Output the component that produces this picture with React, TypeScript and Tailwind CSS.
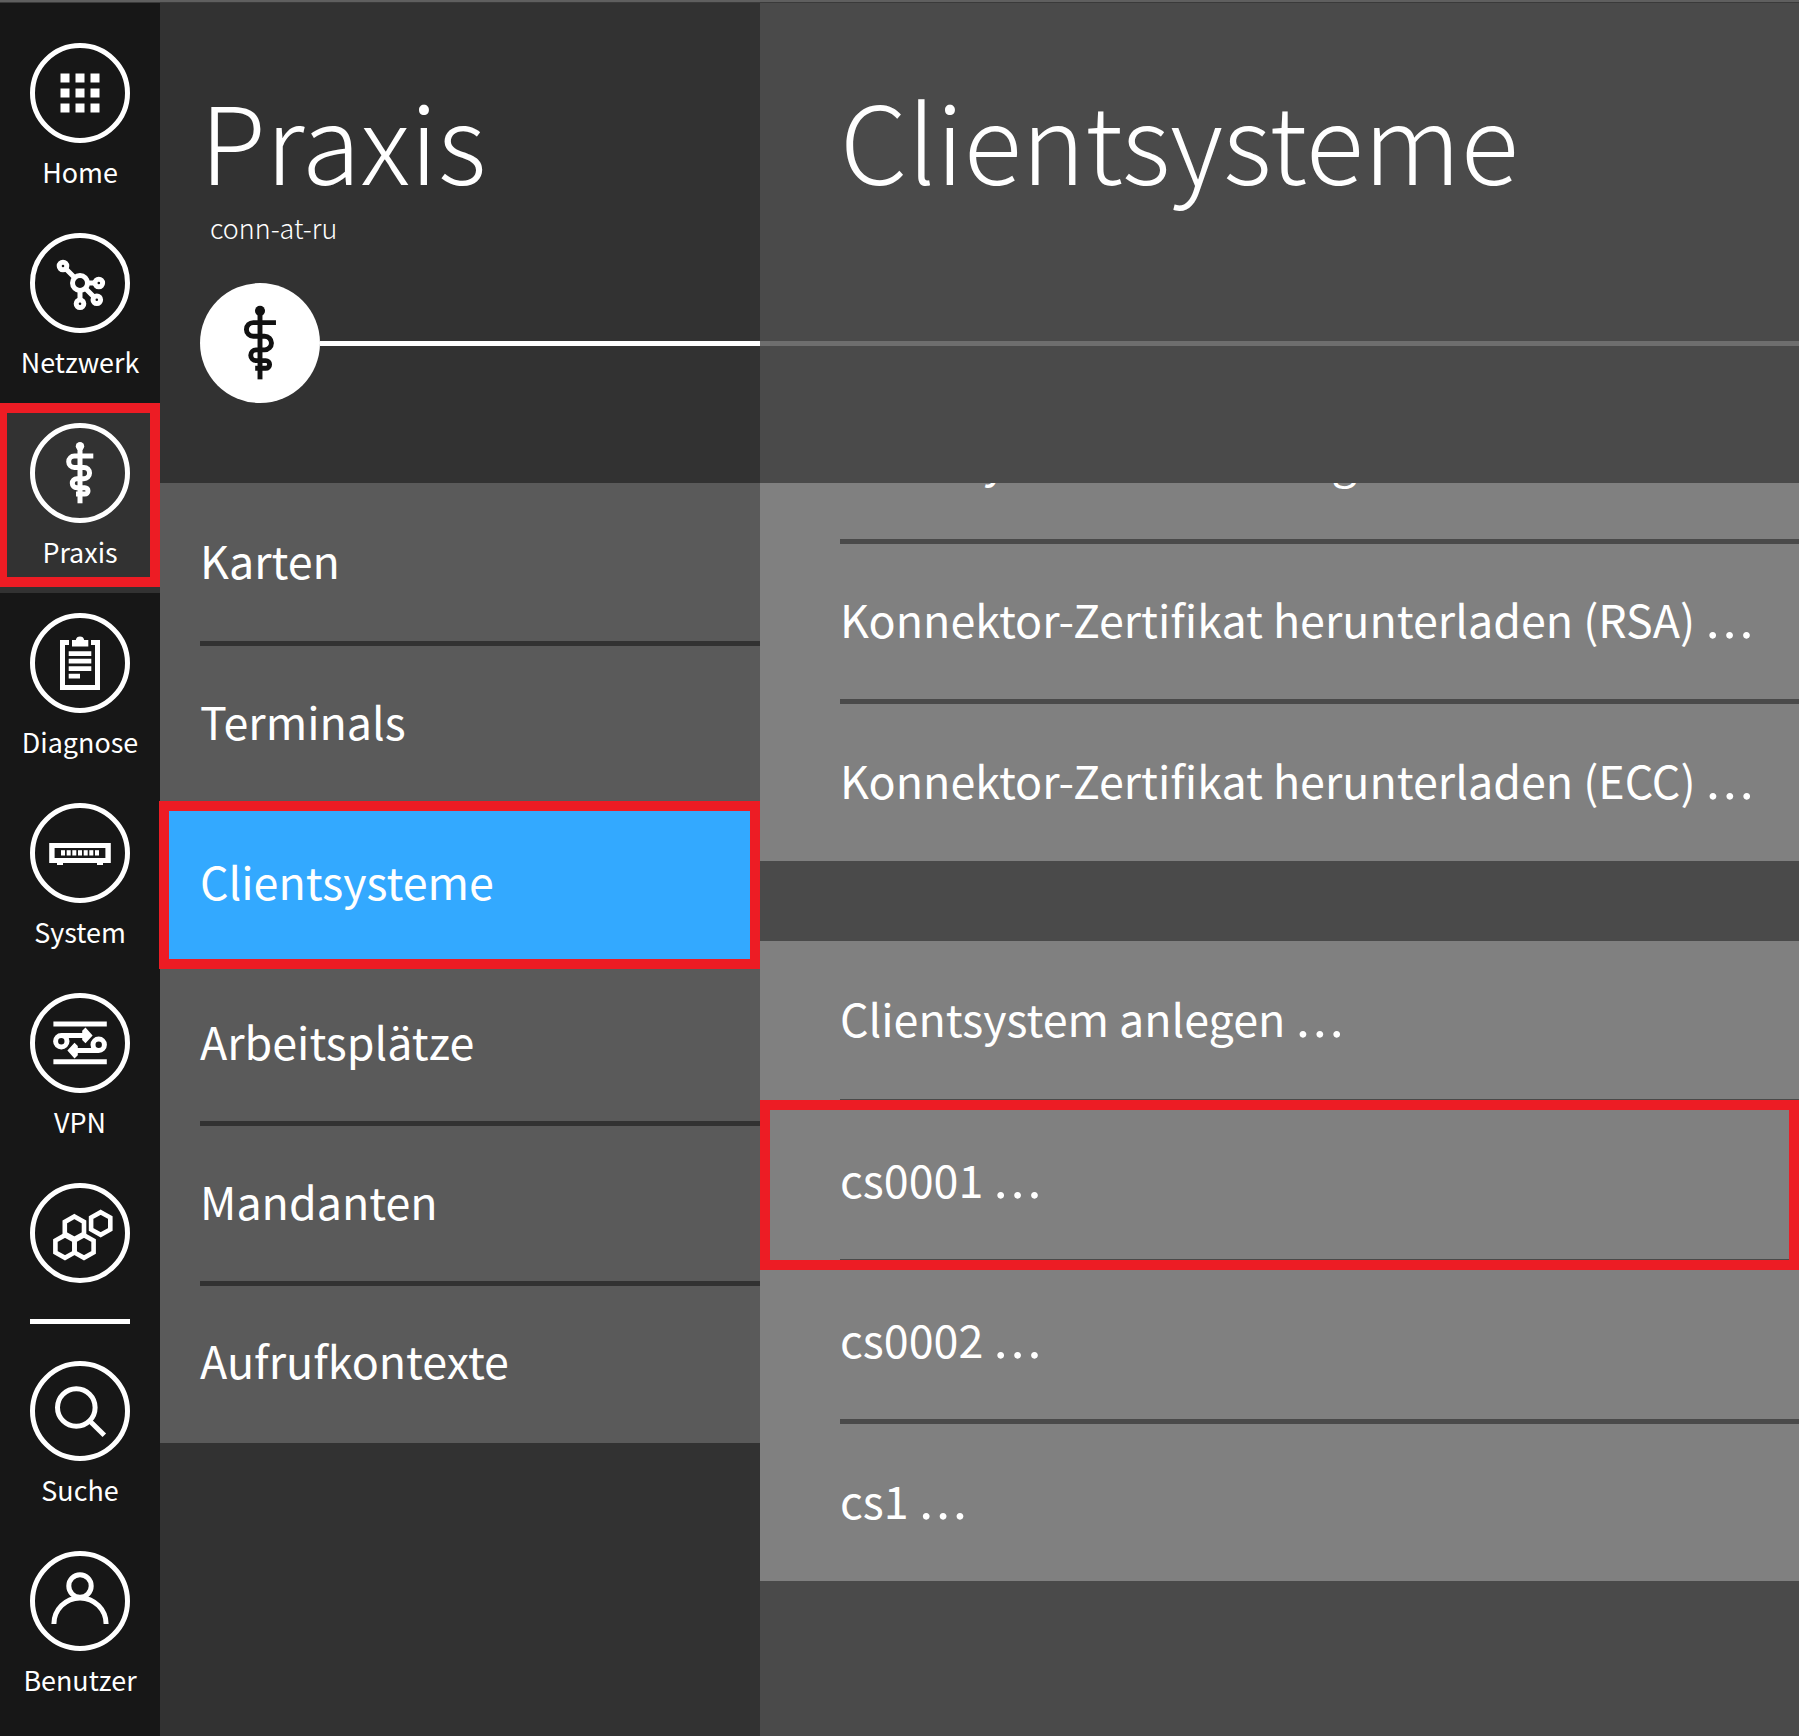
import type { ReactNode } from 'react';

function Staff({ className, strokeWidth }: { className: string; strokeWidth: number }) {
  return (
    <svg viewBox="0 0 100 100" className={className} fill="none" stroke="currentColor" strokeWidth={strokeWidth}>
      <circle cx="50" cy="23.2" r="4.2" fill="currentColor" stroke="none" />
      <path d="M50 24V80.3" />
      <path d="M63.3 33H44.4a5.7 5.7 0 0 0 0 11.4H53.9a5.65 5.65 0 0 1 0 11.3H46.8a4.5 4.5 0 0 0 0 9H54.8a3.2 3.2 0 0 1 0 6.4H46" />
    </svg>
  );
}

function HomeIcon() {
  const steps = [30.5, 45.5, 60.5];
  return (
    <svg viewBox="0 0 100 100" className="size-[100px] shrink-0" fill="currentColor">
      {steps.map((y) => steps.map((x) => <rect key={`${x}-${y}`} x={x} y={y} width="9" height="9" />))}
    </svg>
  );
}

function NetworkIcon() {
  return (
    <svg viewBox="0 0 100 100" className="size-[100px] shrink-0" fill="none" stroke="currentColor" strokeWidth="5">
      <circle cx="50" cy="50" r="7.5" />
      <circle cx="33" cy="33" r="3.8" />
      <circle cx="68.8" cy="50" r="3.8" />
      <circle cx="66.8" cy="66.7" r="3.8" />
      <circle cx="50" cy="70.7" r="3.8" />
      <path d="M35.5 35.5L45 45M57 50H65.5M55 55L64.5 64.5M50 57V67.5" />
    </svg>
  );
}

function ClipboardIcon() {
  return (
    <svg viewBox="0 0 100 100" className="size-[100px] shrink-0" fill="currentColor">
      <path d="M30 27h9v5h-4v40h30V32h-4v-5h9v50H30z" />
      <path d="M42 27h3.8a4.3 4.3 0 0 1 8.4 0H58.3v6.6H42z" />
      <path d="M38.7 38.3h22.6v4.6H38.7zM38.7 45.8h22.6v4.6H38.7zM38.7 53.3h22.6v4.6H38.7zM38.7 60.8h11.3v4.6H38.7z" />
    </svg>
  );
}

function SystemIcon() {
  const ports = [31, 36.7, 42.3, 48, 53.7, 59.3, 65];
  return (
    <svg viewBox="0 0 100 100" className="size-[100px] shrink-0" fill="currentColor">
      <path d="M19.2 40h61.6v20H19.2zM24.6 45v10h50.8V45z" fillRule="evenodd" />
      <path d="M27 59h6v3h-6zM67 59h6v3h-6z" />
      {ports.map((x) => (
        <rect key={x} x={x} y="47.2" width="4" height="5.3" />
      ))}
    </svg>
  );
}

function VpnIcon() {
  return (
    <svg viewBox="0 0 100 100" className="size-[100px] shrink-0" fill="none" stroke="currentColor" strokeWidth="5">
      <path d="M23.4 31h53.4M23.4 68.8h53.4" />
      <circle cx="31.3" cy="48.3" r="5.7" />
      <circle cx="68.7" cy="51.8" r="5.7" />
      <path d="M31.3 42.5H57M68.7 57.6H43" />
      <path d="M52.2 37.8L55.5 34.6L62.6 42.4L55.5 50.2L52.2 47zM47.8 53L44.5 49.8L37.4 57.6L44.5 65.4L47.8 62.2z" fill="currentColor" stroke="none" />
    </svg>
  );
}

function HexIcon() {
  const cells = [
    [44.4, 44.8],
    [35, 63.5],
    [54, 63.5],
    [70.7, 40.5],
  ];
  return (
    <svg viewBox="0 0 100 100" className="size-[100px] shrink-0" fill="none" stroke="currentColor" strokeWidth="4.6">
      {cells.map(([x, y]) => (
        <path key={`${x}-${y}`} transform={`translate(${x} ${y})`} d="M0 -11.3L9.6 -5.9V5.9L0 11.3L-9.6 5.9V-5.9z" />
      ))}
    </svg>
  );
}

function SearchIcon() {
  return (
    <svg viewBox="0 0 100 100" className="size-[100px] shrink-0" fill="none" stroke="currentColor" strokeWidth="5">
      <circle cx="46.3" cy="46.5" r="18.8" />
      <path d="M59.8 60L74.3 74.3" />
    </svg>
  );
}

function UserIcon() {
  return (
    <svg viewBox="0 0 100 100" className="size-[100px] shrink-0" fill="none" stroke="currentColor" strokeWidth="5">
      <circle cx="50" cy="35" r="11.2" />
      <path d="M23.9 73a26.1 26.1 0 0 1 52.2 0" />
    </svg>
  );
}

function NavItem({ icon, label, active }: { icon: ReactNode; label?: string; active?: boolean }) {
  return (
    <div className={`relative flex h-[190px] w-full shrink-0 flex-col items-center pt-5 ${active ? 'bg-[#323232]' : ''}`}>
      <div className="flex size-[100px] shrink-0 items-center justify-center rounded-full border-[5px] border-white">{icon}</div>
      {label && <span className="mt-[9px] text-[26.9px] leading-[40px] whitespace-nowrap">{label}</span>}
      {active && <div className="absolute inset-x-0 top-0 h-[184px] border-y-[10px] border-r-[10px] border-l-[7px] border-[#ed1c24]" />}
    </div>
  );
}

function MenuRow({ label, last, active, pad = 'pt-[46px]' }: { label: string; last?: boolean; active?: boolean; pad?: string }) {
  return (
    <div className={`relative h-40 pl-10 text-[44.8px] leading-[64px] ${pad} ${active ? 'bg-[#33a9ff]' : ''}`}>
      <span className="block whitespace-nowrap">{label}</span>
      {!last && <div className="absolute right-0 -bottom-[3px] left-10 h-[5px] bg-[#323232]" />}
      {active && <div className="absolute -top-[2px] right-0 -bottom-[6px] -left-px z-10 border-10 border-[#ed1c24]" />}
    </div>
  );
}

function ActionRow({ label, last, marked, pad = 'pt-[46px]' }: { label: string; last?: boolean; marked?: boolean; pad?: string }) {
  return (
    <div className={`relative h-40 shrink-0 pl-20 text-[44.8px] leading-[64px] ${pad}`}>
      <span className="block h-16 whitespace-nowrap">
        {label} <span className="-ml-px inline-block h-10 align-[-17px] text-[50.7px] leading-[40px]">…</span>
      </span>
      {!last && <div className="absolute right-0 -bottom-[3px] left-20 h-[5px] bg-[#4a4a4a]" />}
      {marked && <div className="absolute -top-px right-0 -bottom-[9px] left-0 z-10 border-10 border-[#ed1c24]" />}
    </div>
  );
}

export default function App() {
  return (
    <div className="flex h-[1736px] w-[1799px] flex-col overflow-hidden bg-[#323232] font-['Noto_Sans_CJK_SC',sans-serif] text-white">
      <div className="h-[3px] shrink-0 border-b border-[#3a3a3a] bg-[#5f5f5f]" />
      <div className="flex min-h-0 flex-1">
        <nav className="flex w-40 shrink-0 flex-col bg-[#171717] pt-5">
          <NavItem icon={<HomeIcon />} label="Home" />
          <NavItem icon={<NetworkIcon />} label="Netzwerk" />
          <NavItem icon={<Staff className="size-[100px] shrink-0" strokeWidth={5} />} label="Praxis" active />
          <NavItem icon={<ClipboardIcon />} label="Diagnose" />
          <NavItem icon={<SystemIcon />} label="System" />
          <NavItem icon={<VpnIcon />} label="VPN" />
          <div className="h-[156px] shrink-0">
            <NavItem icon={<HexIcon />} />
          </div>
          <div className="mx-auto mb-[17px] h-[5px] w-[100px] shrink-0 bg-white" />
          <NavItem icon={<SearchIcon />} label="Suche" />
          <NavItem icon={<UserIcon />} label="Benutzer" />
        </nav>

        <section className="flex w-[600px] shrink-0 flex-col bg-[#323232]">
          <header className="h-[480px] shrink-0 pt-20 pl-10">
            <h1 className="text-[107.5px] leading-[110px] font-[200]">Praxis</h1>
            <p className="mt-[15px] pl-[10px] text-[26.9px] leading-[40px] font-[300]">conn-at-ru</p>
            <div className="mt-[35px] flex items-center">
              <div className="flex size-[120px] items-center justify-center rounded-full bg-white text-[#111111]">
                <Staff className="size-[120px]" strokeWidth={4.1} />
              </div>
              <div className="h-[5px] flex-1 bg-white" />
            </div>
          </header>
          <div className="bg-[#5a5a5a]">
            <MenuRow label="Karten" pad="pt-[45px]" />
            <MenuRow label="Terminals" />
            <MenuRow label="Clientsysteme" active />
            <MenuRow label="Arbeitsplätze" />
            <MenuRow label="Mandanten" />
            <MenuRow label="Aufrufkontexte" last pad="pt-[45px]" />
          </div>
        </section>

        <section className="flex flex-1 flex-col bg-[#4a4a4a]">
          <header className="h-[480px] shrink-0">
            <h1 className="h-[214px] pt-20 pl-20 text-[107.5px] leading-[110px] font-[200]">Clientsysteme</h1>
            <div className="mt-[124px] h-[5px] bg-[#6e6e6e]" />
          </header>
          <div className="flex h-[378px] shrink-0 flex-col justify-end overflow-hidden bg-[#808080]">
            <ActionRow label="Clientsystem-Einstellungen" />
            <ActionRow label="Konnektor-Zertifikat herunterladen (RSA)" />
            <ActionRow label="Konnektor-Zertifikat herunterladen (ECC)" last pad="pt-[47px]" />
          </div>
          <div className="mt-20 bg-[#808080]">
            <ActionRow label="Clientsystem anlegen" pad="pt-[45px]" />
            <ActionRow label="cs0001" marked />
            <ActionRow label="cs0002" />
            <ActionRow label="cs1" last pad="pt-[47px]" />
          </div>
        </section>
      </div>
    </div>
  );
}
